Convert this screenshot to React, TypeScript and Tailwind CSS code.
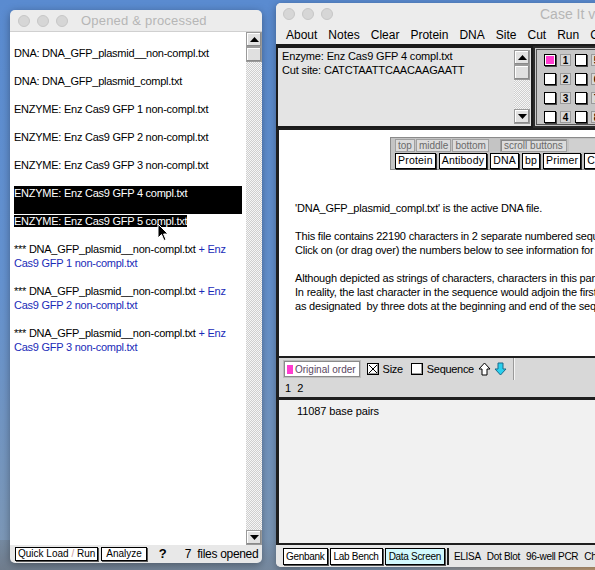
import React from 'react';

// Desktop with two classic-Mac style windows: the file list and the Case It main window.

const sans = "font-['Liberation_Sans',Arial,sans-serif]";
const checker =
  'bg-[image:repeating-conic-gradient(#cfcfcf_0%_25%,#f6f6f6_0%_50%)] bg-[length:2px_2px]';

function Lights() {
  return (
    <div className="flex gap-[7px]">
      <span className="w-[12px] h-[12px] rounded-full bg-[#d6d6d6] border border-[#c6c6c6]" />
      <span className="w-[12px] h-[12px] rounded-full bg-[#d6d6d6] border border-[#c6c6c6]" />
      <span className="w-[12px] h-[12px] rounded-full bg-[#d6d6d6] border border-[#c6c6c6]" />
    </div>
  );
}

function ScrollArrow({ dir }: { dir: 'up' | 'down' }) {
  return (
    <div className="h-[15px] shrink-0 flex items-center justify-center bg-[#e2e2e2] border border-[#9a9a9a] shadow-[inset_-1px_-1px_0_#8a8a8a,inset_1px_1px_0_#fff]">
      <svg width="9" height="5" viewBox="0 0 9 5">
        <path d={dir === 'up' ? 'M0 5 L4.5 0 L9 5Z' : 'M0 0 L4.5 5 L9 0Z'} fill="#000" />
      </svg>
    </div>
  );
}

function ScrollBar({ className = '' }: { className?: string }) {
  return (
    <div className={`w-[16px] shrink-0 flex flex-col ${className}`}>
      <ScrollArrow dir="up" />
      <div className="h-[15px] shrink-0 bg-[#e0e0e0] border border-[#9a9a9a] shadow-[inset_-1px_-1px_0_#8a8a8a,inset_1px_1px_0_#fff]" />
      <div className={`flex-1 ${checker}`} />
      <ScrollArrow dir="down" />
    </div>
  );
}

const Line = ({ children }: { children?: React.ReactNode }) => (
  <div className="h-[14px] leading-[14px] whitespace-nowrap">{children}</div>
);

function LeftWindow() {
  const plain = [
    'DNA: DNA_GFP_plasmid__non-compl.txt',
    'DNA: DNA_GFP_plasmid_compl.txt',
    'ENZYME: Enz Cas9 GFP 1 non-compl.txt',
    'ENZYME: Enz Cas9 GFP 2 non-compl.txt',
    'ENZYME: Enz Cas9 GFP 3 non-compl.txt',
  ];
  return (
    <div className="absolute left-[10px] top-[10px] w-[252px] h-[553px] flex flex-col rounded-[5px] overflow-hidden shadow-[0_2px_8px_rgba(0,0,0,0.35)]">
      <div className="h-[22px] shrink-0 flex items-center pl-[8px] bg-[#ececec] border-b border-[#d0d0d0]">
        <Lights />
        <span className="ml-[13px] text-[13px] text-[#b6b6b6] tracking-[0.2px]">Opened &amp; processed</span>
      </div>
      <div className="flex-1 flex min-h-0">
        <div className="flex-1 min-w-0 overflow-hidden bg-white px-[4px] pt-[14px] text-[11px] tracking-[-0.25px] text-black">
          {plain.map((t) => (
            <React.Fragment key={t}>
              <Line>{t}</Line>
              <Line />
            </React.Fragment>
          ))}
          <div className="bg-black text-white">
            <Line>ENZYME: Enz Cas9 GFP 4 compl.txt</Line>
            <Line />
          </div>
          <Line>
            <span className="bg-black text-white">ENZYME: Enz Cas9 GFP 5 compl.txt</span>
          </Line>
          <Line />
          {[1, 2, 3].map((n) => (
            <React.Fragment key={n}>
              <Line>
                *** DNA_GFP_plasmid__non-compl.txt <span className="text-[#1a2bb8]">+ Enz</span>
              </Line>
              <Line>
                <span className="text-[#1a2bb8]">Cas9 GFP {n} non-compl.txt</span>
              </Line>
              <Line />
            </React.Fragment>
          ))}
        </div>
        <ScrollBar className="bg-white" />
      </div>
      <div className="h-[18px] shrink-0 flex items-center pl-[5px] bg-[#e8e8e8] text-[10px] text-black whitespace-nowrap">
        <span className="shrink-0 h-[14px] leading-[12px] px-[2px] bg-white border border-black shadow-[1px_1px_0_#555]">
          Quick Load <span className="text-[#c99]">/</span> Run
        </span>
        <span className="shrink-0 ml-[3px] h-[14px] leading-[12px] px-[4px] bg-white border border-black shadow-[1px_1px_0_#555]">
          Analyze
        </span>
        <span className="shrink-0 ml-[12px] font-bold text-[13px]">?</span>
        <span className="shrink-0 ml-[18px] text-[12px] tracking-[-0.3px]">7&nbsp; files opened</span>
      </div>
    </div>
  );
}

function Box({ x = false }: { x?: boolean }) {
  return (
    <span className="w-[12px] h-[12px] shrink-0 bg-white border border-black shadow-[inset_-1px_-1px_0_#999] flex items-center justify-center">
      {x && (
        <svg width="10" height="10" viewBox="0 0 10 10">
          <path d="M1 1 L9 9 M9 1 L1 9" stroke="#000" strokeWidth="1" />
        </svg>
      )}
    </span>
  );
}

function GridPanel() {
  const rows = [
    ['1', '5'],
    ['2', '6'],
    ['3', '7'],
    ['4', '8'],
  ];
  return (
    <div className="flex-1 bg-[#c6c6c6] border-2 border-[#2a2a2a] p-[1px]">
      <div className="h-full border border-[#555] flex flex-col gap-[7px] pt-[4px] pl-[7px]">
        {rows.map(([a, b], i) => (
          <div key={a} className="flex gap-[4px]">
            <span className="w-[12px] h-[12px] shrink-0 bg-white border border-black shadow-[1px_1px_0_#444] flex items-center justify-center">
              {i === 0 && <span className="w-[8px] h-[8px] bg-[#ff3ccf]" />}
            </span>
            <span className="w-[11px] h-[12px] shrink-0 bg-[#d8d8d8] border border-[#9a9a9a] text-[10px] leading-[11px] font-bold text-center">
              {a}
            </span>
            <span className="w-[12px] h-[12px] shrink-0 bg-white border border-black shadow-[1px_1px_0_#444]" />
            <span className="w-[11px] h-[12px] shrink-0 bg-[#d8d8d8] border border-[#9a9a9a] text-[10px] leading-[11px] font-bold text-center">
              {b}
            </span>
          </div>
        ))}
      </div>
    </div>
  );
}

function ButtonPanel() {
  const tabs = ['top', 'middle', 'bottom'];
  const buttons = ['Protein', 'Antibody', 'DNA', 'bp', 'Primer', 'Chip'];
  return (
    <div className="ml-[111px] mt-[7px] h-[33px] bg-[#c4c4c4] border border-[#8a8a8a] pl-[4px] pt-[1px] whitespace-nowrap">
      <div className="flex h-[13px] text-[10px] text-[#6a6a6a]">
        {tabs.map((t) => (
          <span key={t} className="mr-[1px] px-[2px] leading-[11px] bg-[#dcdcdc] border border-[#a0a0a0]">
            {t}
          </span>
        ))}
        <span className="ml-[10px] px-[3px] leading-[11px] bg-[#dcdcdc] border border-[#a0a0a0] shadow-[inset_1px_1px_0_#888]">
          scroll buttons
        </span>
        <span className="flex-1 ml-[2px] bg-[#d0d0d0]" />
      </div>
      <div className="flex gap-[3px] mt-[1px] text-[10.5px] tracking-[0.2px]">
        {buttons.map((b) => (
          <span
            key={b}
            className="h-[16px] leading-[13px] px-[2px] bg-white border border-black shadow-[1px_1px_0_#333] text-black"
          >
            {b}
          </span>
        ))}
      </div>
    </div>
  );
}

function RightWindow() {
  const menu = ['About', 'Notes', 'Clear', 'Protein', 'DNA', 'Site', 'Cut', 'Run', 'Gel'];
  const tabs = ['ELISA', 'Dot Blot', '96-well PCR', 'Chip'];
  return (
    <div className="absolute left-[276px] top-[3px] w-[340px] h-[564px] flex flex-col rounded-[5px] overflow-hidden bg-[#e6e6e6] shadow-[0_2px_8px_rgba(0,0,0,0.35)]">
      <div className="h-[22px] shrink-0 flex items-center pl-[7px] bg-[#ececec] whitespace-nowrap">
        <Lights />
        <span className="ml-[207px] text-[14px] text-[#b6b6b6]">Case It v7.0</span>
      </div>
      <div className="h-[21px] shrink-0 flex items-center gap-[11px] pl-[10px] bg-[#ececec] text-[12px] text-black border-b-2 border-[#1a1a1a] whitespace-nowrap">
        {menu.map((m) => (
          <span key={m}>{m}</span>
        ))}
      </div>
      <div className="h-[82px] shrink-0 flex">
        <div className="w-[257px] shrink-0 flex bg-[#e4e4e4] border-2 border-[#1a1a1a]">
          <div className="flex-1 pl-[4px] pt-[1px] text-[11px] leading-[14px] text-black tracking-[-0.15px] whitespace-nowrap">
            <div>Enzyme: Enz Cas9 GFP 4 compl.txt</div>
            <div>Cut site: CATCTAATTCAACAAGAATT</div>
          </div>
          <ScrollBar className="my-[2px] mr-[1px]" />
        </div>
        <GridPanel />
      </div>
      <div className="flex-1 flex flex-col min-h-0 border-l-[3px] border-[#1e1e1e]">
        <div className="h-[228px] shrink-0 bg-white border-t-2 border-[#1e1e1e]">
          <ButtonPanel />
          <div className="pl-[16px] pt-[31px] text-[11px] leading-[14px] text-black whitespace-nowrap tracking-[-0.2px]">
            <div>'DNA_GFP_plasmid_compl.txt' is the active DNA file.</div>
            <div className="h-[14px]" />
            <div>This file contains 22190 characters in 2 separate numbered sequences.</div>
            <div>Click on (or drag over) the numbers below to see information for each.</div>
            <div className="h-[14px]" />
            <div>Although depicted as strings of characters, characters in this panel are circular.</div>
            <div>In reality, the last character in the sequence would adjoin the first one,</div>
            <div>as designated&nbsp; by three dots at the beginning and end of the sequence.</div>
          </div>
        </div>
        <div className="h-[24px] shrink-0 flex items-center bg-[#d8d8d8] border-t-2 border-[#1e1e1e] pl-[5px] text-[11px] tracking-[-0.3px] text-black whitespace-nowrap">
          <span className="h-[16px] flex items-center gap-[2px] pl-[2px] pr-[3px] bg-white border border-[#8a8a8a] shadow-[0_0_0_1px_#bdbdbd] tracking-normal">
            <span className="w-[6px] h-[9px] bg-[#ff3ccf]" />
            <span className="text-[10px] text-[#5a4660]">Original order</span>
          </span>
          <span className="ml-[7px]">
            <Box x />
          </span>
          <span className="ml-[4px]">Size</span>
          <span className="ml-[8px]">
            <Box />
          </span>
          <span className="ml-[4px]">Sequence</span>
          <svg className="ml-[4px]" width="13" height="14" viewBox="0 0 13 14">
            <path d="M6.5 1 L12 7 L9 7 L9 13 L4 13 L4 7 L1 7Z" fill="#fff" stroke="#000" strokeWidth="1" />
          </svg>
          <svg className="ml-[3px]" width="13" height="14" viewBox="0 0 13 14">
            <path d="M4 1 L9 1 L9 7 L12 7 L6.5 13 L1 7 L4 7Z" fill="#2ad0ee" stroke="#1a6a8a" strokeWidth="1" />
          </svg>
          <span className="ml-[6px] h-full border-l border-[#9a9a9a] shadow-[1px_0_0_#f4f4f4]" />
        </div>
        <div className="h-[17px] shrink-0 flex items-center gap-[6px] pl-[6px] bg-[#d8d8d8] text-[11px] text-black">
          <span>1</span>
          <span>2</span>
        </div>
        <div className="flex-1 bg-[#f1f1f1] border-t-[3px] border-[#1e1e1e] border-b-2 pl-[18px] pt-[3px] text-[11px] text-black tracking-[-0.1px]">
          11087 base pairs
        </div>
      </div>
      <div className="h-[22px] shrink-0 flex items-center pl-[7px] bg-[#e6e6e6] text-[10px] text-black tracking-[-0.3px] whitespace-nowrap">
        <span className="shrink-0 h-[17px] leading-[15px] px-[2px] bg-white border border-black shadow-[1px_1px_0_#555]">
          Genbank
        </span>
        <span className="shrink-0 ml-[2px] h-[17px] leading-[15px] px-[3px] bg-white border border-black shadow-[1px_1px_0_#555]">
          Lab Bench
        </span>
        <span className="shrink-0 ml-[2px] h-[17px] leading-[15px] px-[3px] bg-[#d2f8fd] border border-black shadow-[1px_1px_0_#555]">
          Data Screen
        </span>
        <span className="shrink-0 ml-[2px] h-[17px] border-l-2 border-[#1e1e1e]" />
        <div className="flex gap-[6px] ml-[5px]">
          {tabs.map((t) => (
            <span key={t}>{t}</span>
          ))}
        </div>
      </div>
    </div>
  );
}

function Cursor() {
  return (
    <svg className="absolute left-[157px] top-[223px]" width="12" height="19" viewBox="0 0 12 19">
      <path
        d="M1 1 L1 15 L4.5 11.5 L7 17.5 L9 16.6 L6.6 11 L11 11 Z"
        fill="#000"
        stroke="#fff"
        strokeWidth="1"
        strokeLinejoin="round"
      />
    </svg>
  );
}

export default function App() {
  return (
    <div
      className={`relative w-[595px] h-[570px] overflow-hidden bg-gradient-to-b from-[#5a8bd0] via-[#6592cf] to-[#7f98b4] ${sans}`}
    >
      <div className="absolute left-0 bottom-0 w-[300px] h-[30px] bg-gradient-to-tr from-[#6f7c8c] to-transparent" />
      <div className="absolute right-0 bottom-0 w-[200px] h-[20px] bg-gradient-to-l from-[#c9a47c] to-transparent" />
      <LeftWindow />
      <RightWindow />
      <Cursor />
    </div>
  );
}
